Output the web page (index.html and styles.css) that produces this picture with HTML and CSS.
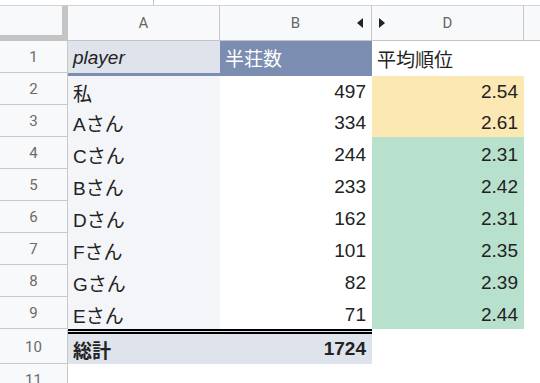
FILE: index.html
```html
<!DOCTYPE html>
<html lang="ja">
<head>
<meta charset="utf-8">
<link rel="stylesheet" href="styles.css">
</head>
<body>
<div class="top"><span class="tick"></span></div>
<div class="sheet">
  <div class="corner"></div>
  <div class="colh">A</div>
  <div class="colh split"><span></span><span>B</span><span class="arr-wrap end"><i class="arr-l"></i></span></div>
  <div class="colh split"><span class="arr-wrap start"><i class="arr-r"></i></span><span>D</span><span></span></div>
  <div class="colh last"></div>

  <div class="rowh">1</div>
  <div class="cell a1"><em>player</em></div>
  <div class="cell b1">半荘数</div>
  <div class="cell">平均順位</div>
  <div class="cell"></div>

  <div class="rowh">2</div>
  <div class="cell acol band">私</div>
  <div class="cell num band">497</div>
  <div class="cell num yellow band-w">2.54</div>
  <div class="cell"></div>

  <div class="rowh">3</div>
  <div class="cell acol">Aさん</div>
  <div class="cell num">334</div>
  <div class="cell num yellow">2.61</div>
  <div class="cell"></div>

  <div class="rowh">4</div>
  <div class="cell acol">Cさん</div>
  <div class="cell num">244</div>
  <div class="cell num green">2.31</div>
  <div class="cell"></div>

  <div class="rowh">5</div>
  <div class="cell acol">Bさん</div>
  <div class="cell num">233</div>
  <div class="cell num green">2.42</div>
  <div class="cell"></div>

  <div class="rowh">6</div>
  <div class="cell acol">Dさん</div>
  <div class="cell num">162</div>
  <div class="cell num green">2.31</div>
  <div class="cell"></div>

  <div class="rowh">7</div>
  <div class="cell acol">Fさん</div>
  <div class="cell num">101</div>
  <div class="cell num green">2.35</div>
  <div class="cell"></div>

  <div class="rowh">8</div>
  <div class="cell acol">Gさん</div>
  <div class="cell num">82</div>
  <div class="cell num green">2.39</div>
  <div class="cell"></div>

  <div class="rowh">9</div>
  <div class="cell acol">Eさん</div>
  <div class="cell num">71</div>
  <div class="cell num green">2.44</div>
  <div class="cell"></div>

  <div class="rowh">10</div>
  <div class="cell total">総計</div>
  <div class="cell num total">1724</div>
  <div class="cell"></div>
  <div class="cell"></div>

  <div class="rowh">11</div>
  <div class="cell"></div>
  <div class="cell"></div>
  <div class="cell"></div>
  <div class="cell"></div>
</div>
</body>
</html>
```
FILE: styles.css
```css
html, body {
  margin: 0;
  padding: 0;
  background: #ffffff;
}
body {
  width: 540px;
  height: 383px;
  overflow: hidden;
  font-family: "Liberation Sans", Arial, "Noto Sans CJK JP", sans-serif;
}
.top {
  height: 5px;
  display: flex;
}
.tick {
  margin-left: 153px;
  width: 1px;
  height: 5px;
  background: #c6c6c6;
}
.sheet {
  display: grid;
  grid-template-columns: 68px 152px 152px 152px 1fr;
  grid-template-rows: 36px repeat(9, 32px) 35px 32px;
}
.corner {
  background: #f8f9fa;
  border-top: 1px solid #d3d3d3;
  border-right: 6px solid #c4c4c4;
  border-bottom: 6px solid #c4c4c4;
  box-sizing: border-box;
}
.colh {
  background: #f8f9fa;
  border-top: 1px solid #d3d3d3;
  border-bottom: 1px solid #c4c4c4;
  border-right: 1px solid #c8c8c8;
  box-sizing: border-box;
  display: flex;
  align-items: center;
  justify-content: center;
  font-family: Roboto, "Liberation Sans", sans-serif;
  font-size: 15px;
  color: #666666;
}
.colh.last {
  border-right: none;
}
.colh.split {
  display: grid;
  grid-template-columns: 1fr auto 1fr;
  align-items: center;
}
.arr-wrap {
  display: flex;
  align-items: center;
}
.arr-wrap.end {
  justify-content: flex-end;
  padding-right: 8px;
}
.arr-wrap.start {
  justify-content: flex-start;
  padding-left: 7px;
}
.arr-l {
  width: 0;
  height: 0;
  border-top: 5px solid transparent;
  border-bottom: 5px solid transparent;
  border-right: 6px solid #222222;
}
.arr-r {
  width: 0;
  height: 0;
  border-top: 5px solid transparent;
  border-bottom: 5px solid transparent;
  border-left: 6px solid #222222;
}
.rowh {
  background: #f8f9fa;
  border-right: 1px solid #c8c8c8;
  border-bottom: 1px solid #c8c8c8;
  box-sizing: border-box;
  display: flex;
  align-items: center;
  justify-content: center;
  font-family: Roboto, "Liberation Sans", sans-serif;
  font-size: 15px;
  color: #6b6b6b;
  padding-top: 1px;
}
.cell {
  box-sizing: border-box;
  display: flex;
  align-items: center;
  padding: 3px 6px 0 5px;
  font-size: 19px;
  color: #222222;
  white-space: nowrap;
  overflow: hidden;
}
.num {
  justify-content: flex-end;
}
.a1 {
  background: #dfe3ec;
  padding-top: 1px;
}
.a1 em {
  font-style: italic;
}
.b1 {
  background: #7b8db0;
  color: #ffffff;
  padding-top: 1px;
}
.acol {
  background: #f4f5f8;
}
.band {
  border-top: 3px solid #7b8db0;
}
.band-w {
  border-top: 3px solid #ffffff;
}
.yellow {
  background: #fce8b2;
}
.green {
  background: #b7e1cd;
}
.total {
  background: #dfe3ec;
  border-top: 5px double #000000;
  font-weight: bold;
  padding-top: 0;
}
```
